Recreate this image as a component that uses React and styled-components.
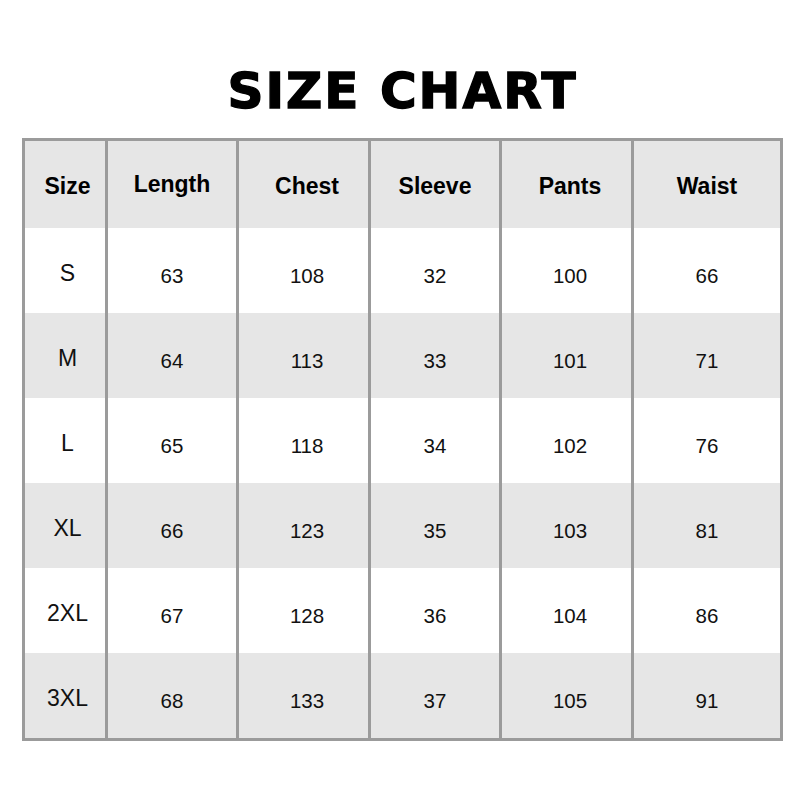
import React from 'react';
import styled, { createGlobalStyle } from 'styled-components';

const GlobalStyle = createGlobalStyle`
  html, body {
    margin: 0;
    padding: 0;
    background: #ffffff;
  }
  body {
    font-family: "Liberation Sans", Arial, sans-serif;
    color: #111111;
  }
`;

const Page = styled.div`
  width: 800px;
  height: 800px;
  box-sizing: border-box;
  padding: 66px 17px 0 22px;
  display: flex;
  flex-direction: column;
  align-items: center;
`;

const Title = styled.h1`
  margin: 0;
  font-family: "DejaVu Sans", "Liberation Sans", sans-serif;
  font-weight: 900;
  font-size: 50px;
  line-height: 50px;
  letter-spacing: 2px;
  color: #000000;
  -webkit-text-stroke: 1.4px #000000;
`;

const Table = styled.div`
  margin-top: 22px;
  display: grid;
  grid-template-columns: 80px 128px 129px 128px 129px 146px;
  grid-template-rows: 87px repeat(6, 85px);
  column-gap: 3px;
  background: #9b9b9b;
  border: 3px solid #9b9b9b;
`;

const Cell = styled.div`
  display: flex;
  align-items: center;
  justify-content: center;
  box-sizing: border-box;
  padding-top: ${(p) => p.$shift}px;
  padding-left: ${(p) => p.$nudge || 0}px;
  background: ${(p) => (p.$shade ? '#e6e6e6' : '#ffffff')};
  color: #111111;
`;

const HeadCell = styled(Cell)`
  font-weight: 700;
  font-size: 23px;
  color: #000000;
`;

const SizeCell = styled(Cell)`
  font-size: 23px;
`;

const ValueCell = styled(Cell)`
  font-size: 20.5px;
`;

const headers = ['Size', 'Length', 'Chest', 'Sleeve', 'Pants', 'Waist'];
const nudges = [5, 0, 7, 0, 7, 0];

const rows = [
  ['S', 63, 108, 32, 100, 66],
  ['M', 64, 113, 33, 101, 71],
  ['L', 65, 118, 34, 102, 76],
  ['XL', 66, 123, 35, 103, 81],
  ['2XL', 67, 128, 36, 104, 86],
  ['3XL', 68, 133, 37, 105, 91],
];

const App = () => (
  <>
    <GlobalStyle />
    <Page>
      <Title>SIZE CHART</Title>
      <Table>
        {headers.map((h, i) => (
          <HeadCell key={h} $shade $shift={i === 1 ? 0 : 3} $nudge={nudges[i]}>
            {h}
          </HeadCell>
        ))}
        {rows.map((r, ri) =>
          r.map((v, ci) =>
            ci === 0 ? (
              <SizeCell key={`${ri}-${ci}`} $shade={ri % 2 === 1} $shift={6} $nudge={nudges[ci]}>
                {v}
              </SizeCell>
            ) : (
              <ValueCell key={`${ri}-${ci}`} $shade={ri % 2 === 1} $shift={10} $nudge={nudges[ci]}>
                {v}
              </ValueCell>
            )
          )
        )}
      </Table>
    </Page>
  </>
);

export default App;
